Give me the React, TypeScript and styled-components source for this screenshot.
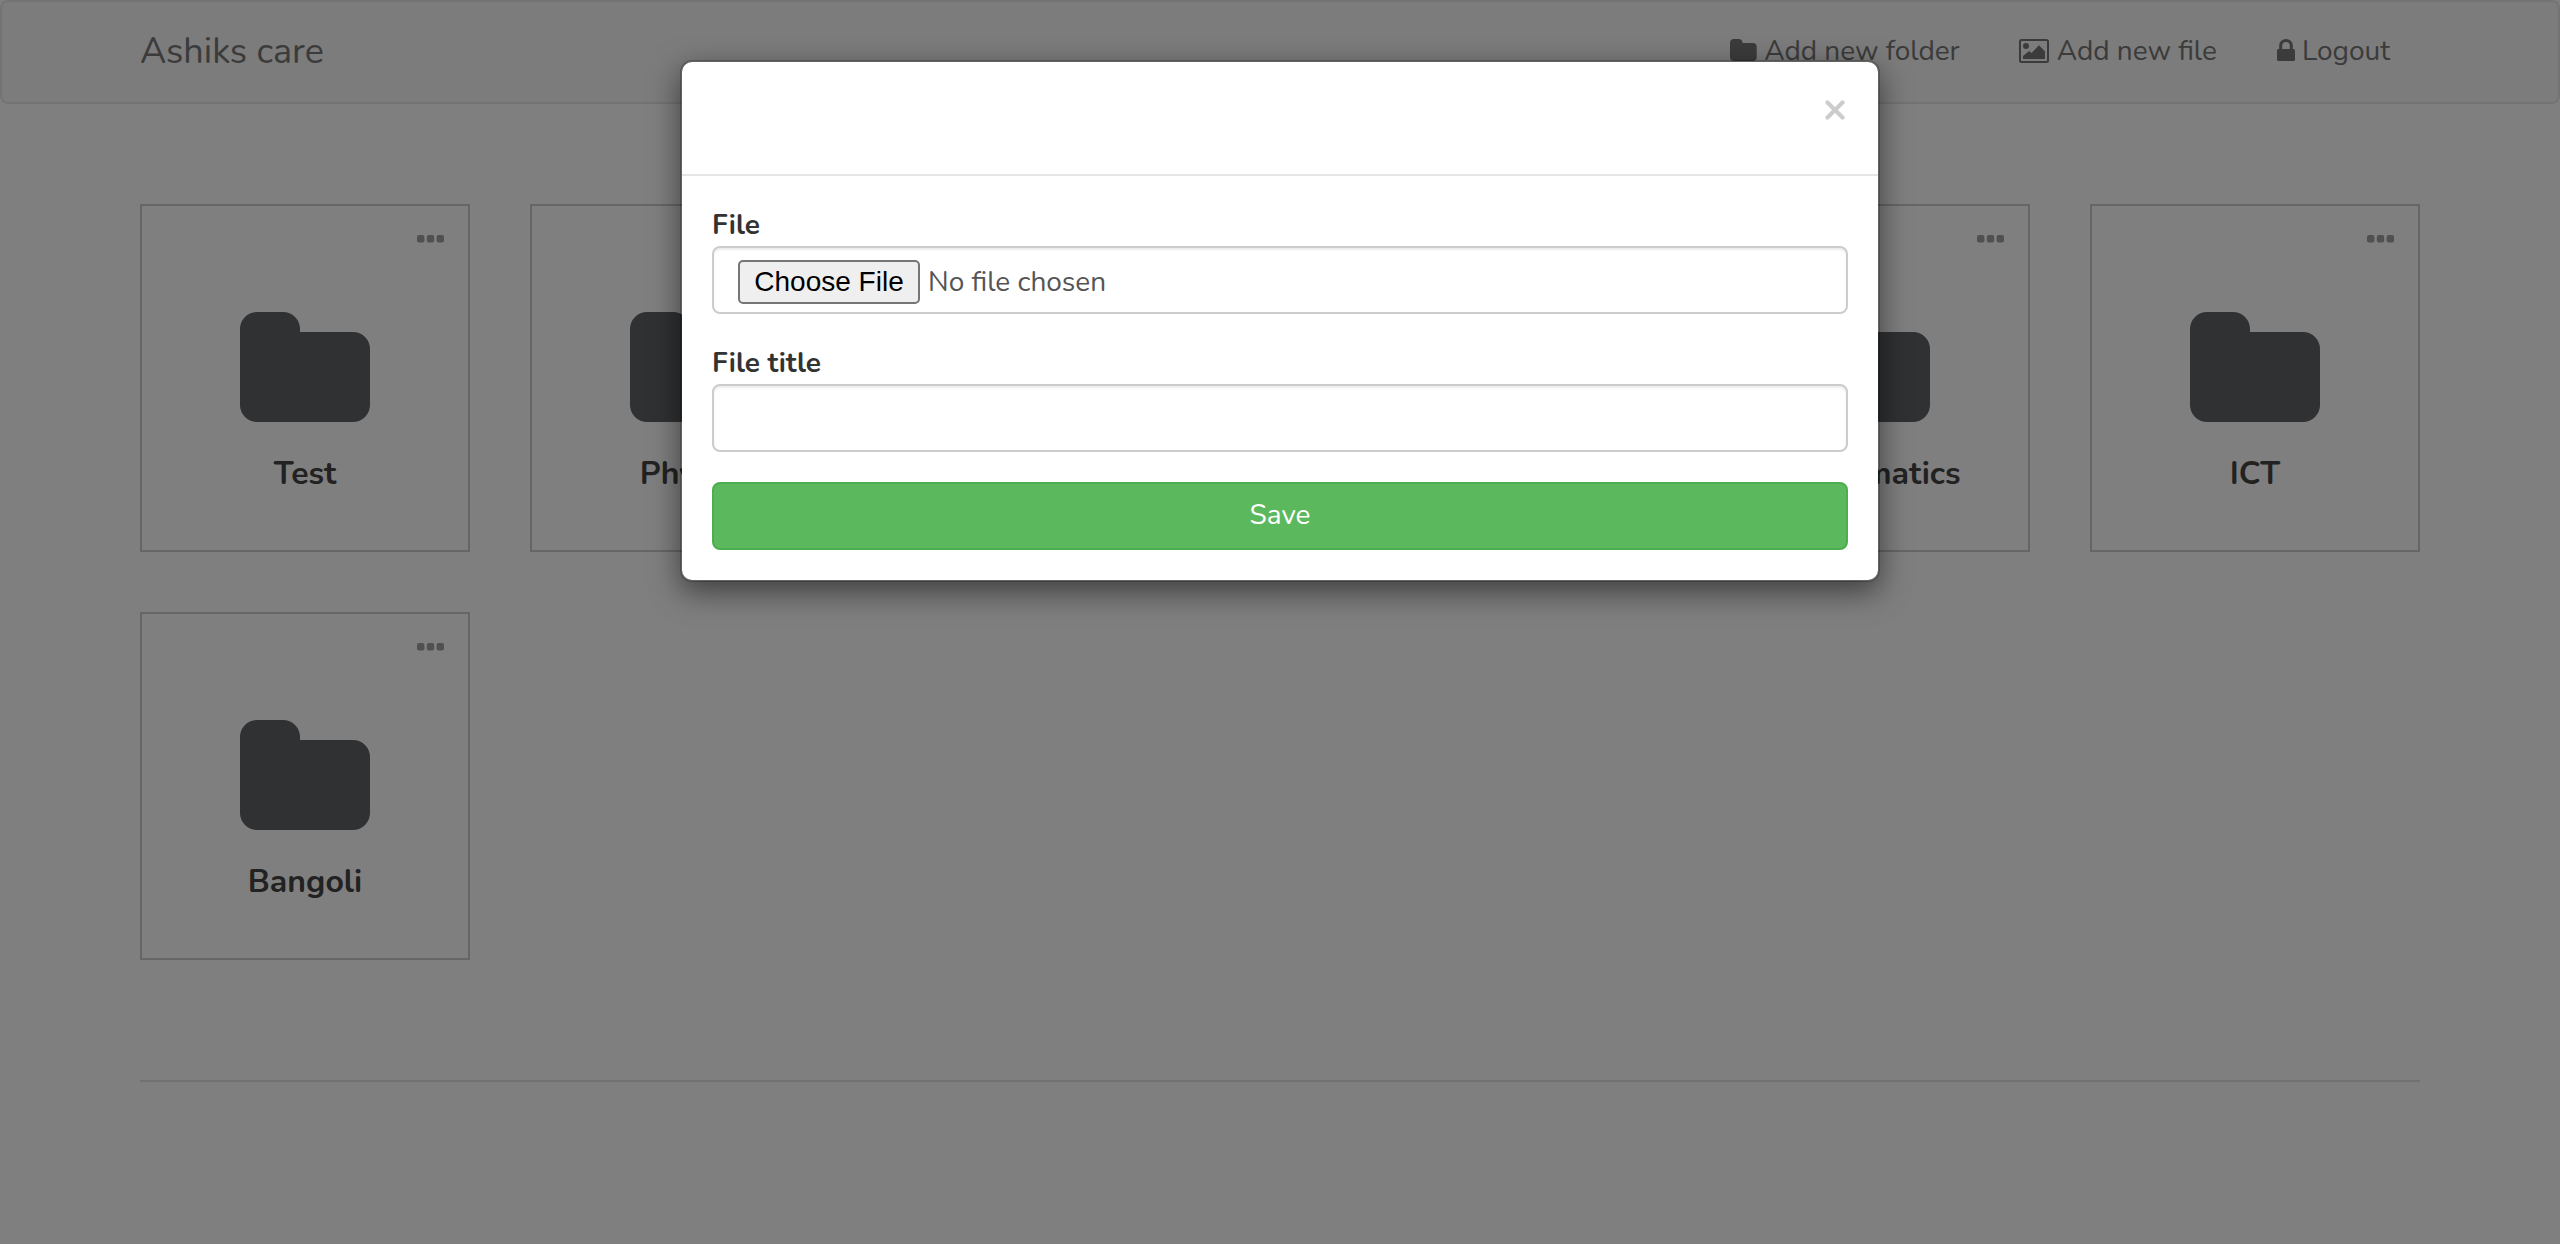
import React from "react";
import styled, { createGlobalStyle } from "styled-components";

const Global = createGlobalStyle`
  * { box-sizing: border-box; }
  body { margin: 0; background: #fff; color: #333; overflow: hidden;
    font: 28px/40px Nunito, Lato, sans-serif; }
`;
const Page = styled.div`height: 1244px; position: relative;`;
const Navbar = styled.nav`
  display: flex; justify-content: space-between; align-items: center;
  height: 104px; padding: 0 168px 2px 138px; background: #f8f8f8;
  border: 2px solid #e7e7e7; border-radius: 8px; color: #777;
`;
const Brand = styled.div`font-size: 36px; padding-top: 2px; white-space: nowrap;`;
const Links = styled.div`display: flex; white-space: nowrap;`;
const NavLink = styled.a<{ $gap?: number; $after?: number }>`
  display: flex; align-items: center; gap: ${(p) => p.$gap ?? 7}px;
  margin-right: ${(p) => p.$after ?? 0}px;
`;
const Grid = styled.main`
  display: grid; grid-template-columns: repeat(6, 330px); gap: 60px;
  padding: 100px 140px 0;
`;
const Card = styled.section`
  height: 348px; border: 2px solid #ccc; display: flex; flex-direction: column; align-items: center;
`;
const Dots = styled.div`
  align-self: flex-end; height: 8px; margin: 29px 24px 69px 0;
`;
const Name = styled.h4`margin: 30px 0 0; font-size: 32px; line-height: 44px; font-weight: 700; color: #444;`;
const Rule = styled.hr`margin: 120px 140px 0; border: 0; border-top: 2px solid #e2e2e2;`;
const Overlay = styled.div`
  position: absolute; inset: 0; background: rgba(0, 0, 0, 0.5);
  display: flex; justify-content: center; align-items: flex-start; padding-top: 60px;
`;
const Dialog = styled.div`
  width: 1200px; height: 522px; background: #fff; background-clip: padding-box;
  border: 2px solid rgba(0, 0, 0, 0.2); border-radius: 12px;
  box-shadow: 0 10px 30px rgba(0, 0, 0, 0.5);
`;
const Header = styled.header`
  height: 114px; border-bottom: 2px solid #e5e5e5; padding: 38px 33px 0;
  display: flex; justify-content: flex-end;
`;
const Form = styled.form`display: flex; flex-direction: column; padding: 29px 30px 0;`;
const Label = styled.label`font-weight: 700; line-height: 40px; margin-bottom: 1px;`;
const Field = styled.div`
  height: 68px; border: 2px solid #ccc; border-radius: 8px; margin-bottom: 29px;
  box-shadow: inset 0 2px 2px rgba(0, 0, 0, 0.075); padding: 4px 24px 0; color: #555;
  display: flex; align-items: center; gap: 8px;
`;
const Choose = styled.button`
  width: 182px; height: 44px; padding: 0; border: 2px solid #767676; border-radius: 5px;
  background: #efefef; color: #000; font: 28px "Liberation Sans", Arial, sans-serif;
`;
const Save = styled.button`
  height: 68px; margin-top: 1px; border: 2px solid #4cae4c; border-radius: 8px; background: #5cb85c;
  color: #fff; font: inherit; padding: 0 0 2px;
`;

const FolderIcon = () => (
  <svg width="130" height="110" viewBox="0 0 130 110" fill="#606266">
    <path d="M17 0H43A17 17 0 0 1 60 17V20H113A17 17 0 0 1 130 37V93A17 17 0 0 1 113 110H17A17 17 0 0 1 0 93V17A17 17 0 0 1 17 0Z" />
  </svg>
);
const DotsIcon = () => (
  <svg width="27" height="8" viewBox="0 0 27 8" fill="#a0a0a0" display="block">
    <rect width="7.4" height="7.6" rx="2" />
    <rect x="9.8" width="7.4" height="7.6" rx="2" />
    <rect x="19.6" width="7.4" height="7.6" rx="2" />
  </svg>
);
const SmallFolder = () => (
  <svg width="27" height="24" viewBox="0 0 27 24" fill="#777">
    <path d="M4 0H8.5Q12.5 0 12.5 4H22.8Q26.7 4 26.7 8V18Q26.7 22 22.7 22H4Q0 22 0 18V4Q0 0 4 0Z" />
  </svg>
);
const ImageIcon = () => (
  <svg width="30" height="24" viewBox="0 0 30 24">
    <rect x="1" y="1" width="28" height="22" rx="1.5" fill="none" stroke="#777" strokeWidth="2" />
    <circle cx="7" cy="7" r="3" fill="#777" />
    <path d="M4 20V17L10 12L12.5 14L20 6.3L26 12.5V20Z" fill="#777" />
  </svg>
);
const LockIcon = () => (
  <svg width="18" height="24" viewBox="0 0 18 24">
    <path d="M3.7 11V6.5A5.3 5 0 0 1 14.3 6.5V11" fill="none" stroke="#777" strokeWidth="3" />
    <rect y="10" width="18" height="12" rx="1.5" fill="#777" />
  </svg>
);
const CloseIcon = () => (
  <svg width="20" height="20" viewBox="0 0 20 20">
    <path d="M2.5 2.5L17.5 17.5M17.5 2.5L2.5 17.5" stroke="#ccc" strokeWidth="4.2" strokeLinecap="round" />
  </svg>
);

const folders = ["Test", "Physics", "Chemistry", "Biology", "Mathematics", "ICT", "Bangoli"];

export default function App() {
  return (
    <Page>
      <Global />
      <Navbar>
        <Brand>Ashiks care</Brand>
        <Links>
          <NavLink $after={59}><SmallFolder />Add new folder</NavLink>
          <NavLink $gap={8} $after={60}><ImageIcon />Add new file</NavLink>
          <NavLink><LockIcon />Logout</NavLink>
        </Links>
      </Navbar>
      <Grid>
        {folders.map((name) => (
          <Card key={name}>
            <Dots><DotsIcon /></Dots>
            <FolderIcon />
            <Name>{name}</Name>
          </Card>
        ))}
      </Grid>
      <Rule />
      <Overlay>
        <Dialog>
          <Header><CloseIcon /></Header>
          <Form>
            <Label>File</Label>
            <Field><Choose type="button">Choose File</Choose>No file chosen</Field>
            <Label>File title</Label>
            <Field />
            <Save type="button">Save</Save>
          </Form>
        </Dialog>
      </Overlay>
    </Page>
  );
}
